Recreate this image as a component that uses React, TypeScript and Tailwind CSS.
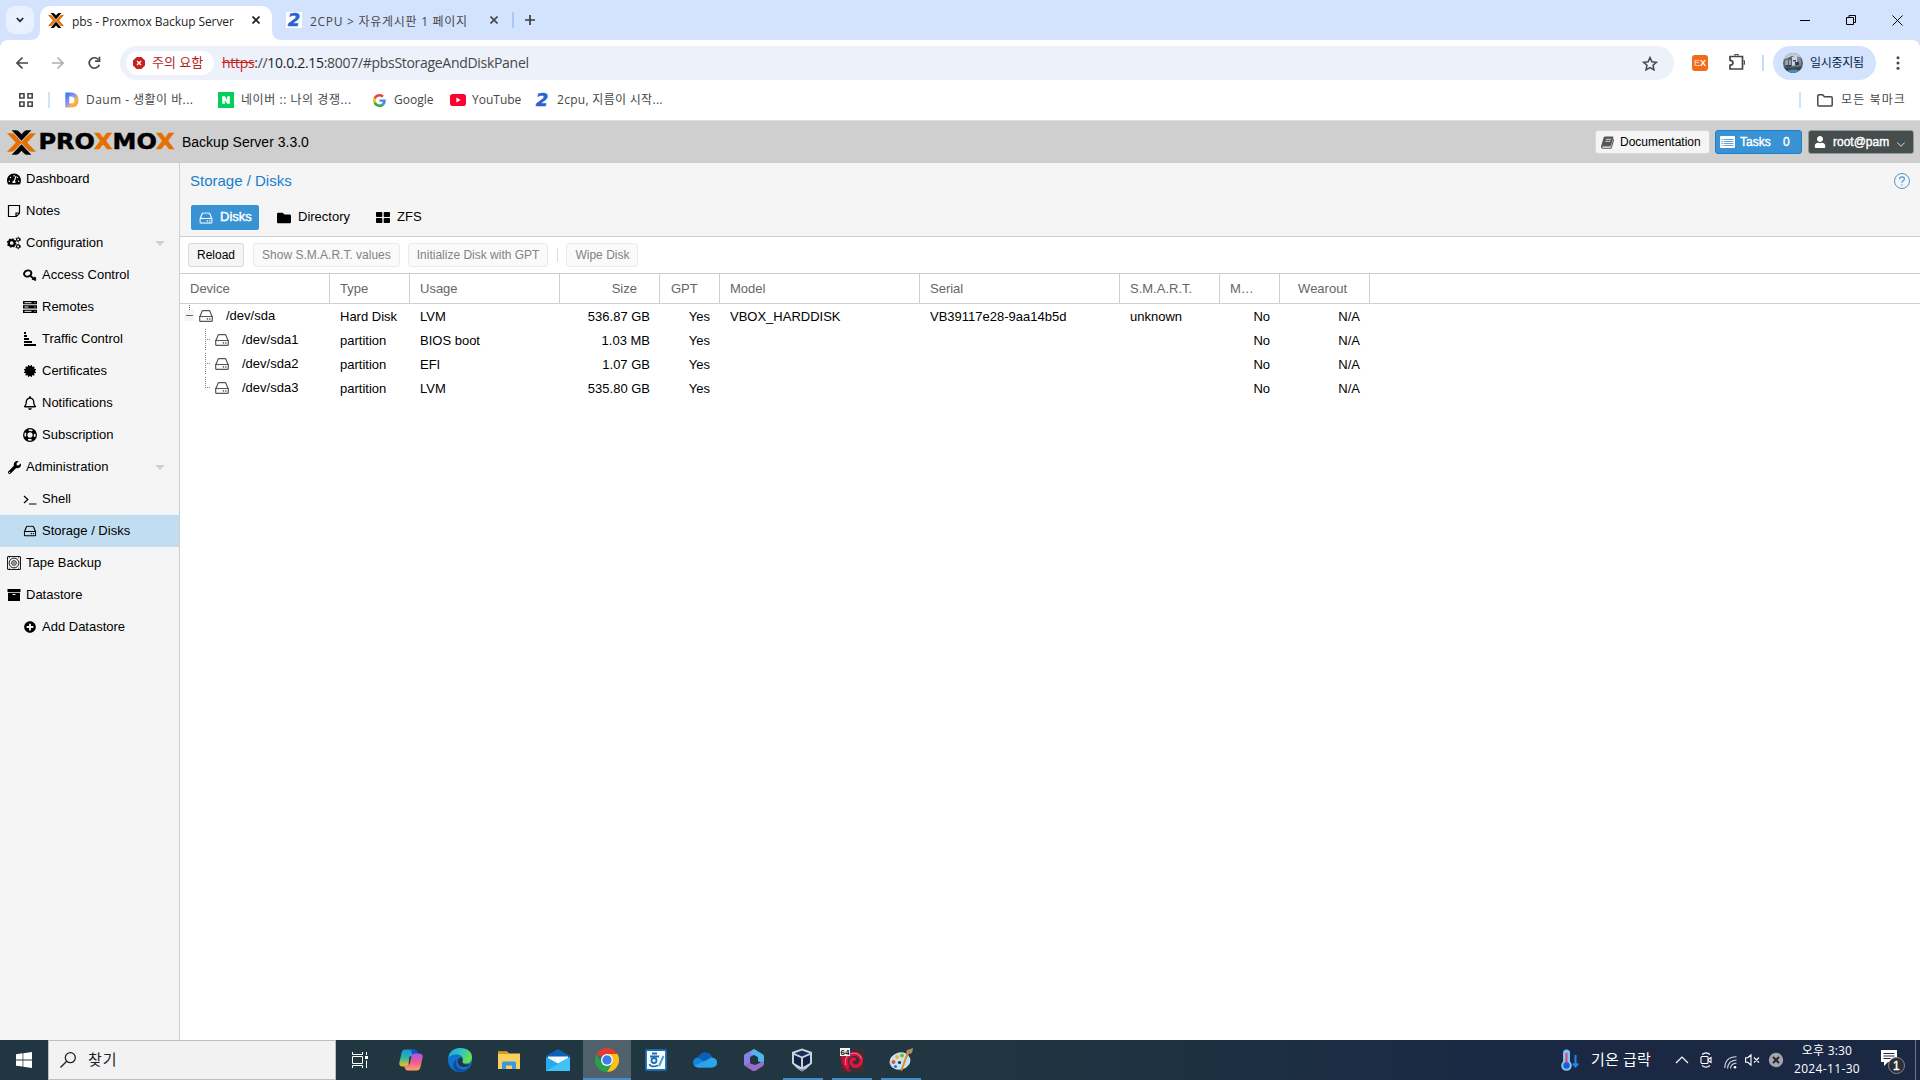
import type { ReactNode } from 'react';
import { FaCertificate, FaFolder, FaPlusCircle, FaRegBell, FaTachometerAlt, FaUser, FaWrench } from 'react-icons/fa';

/* ── Small icons ──────────────────────────────────────────────── */

function HddIcon({ className = '' }: { className?: string }) {
  return (
    <svg viewBox="0 0 14 12" width="14" height="12" fill="none" stroke="currentColor" strokeWidth="1.2" className={className}>
      <path d="M1 6.500 2.900 1.600Q3.200.7 4.100.7h5.800q.9 0 1.200.9L13 6.500" />
      <path d="M.7 6.500h12.600v4q0 .9-.9.9H1.600q-.9 0-.9-.9z" />
      <path d="M7.800 9h1.300M10.200 9h1.300" strokeWidth="1.300" />
    </svg>
  );
}

function NoteIcon() {
  return (
    <svg viewBox="0 0 14 14" width="14" height="14" fill="none" stroke="currentColor" strokeWidth="1.200">
      <path d="M1.500 1.500h11v7.800l-3.200 3.200H1.500zM12.500 9H9v3.500" />
    </svg>
  );
}

function CogsIcon() {
  return (
    <svg viewBox="0 0 15 14" width="15" height="14" fill="none" stroke="currentColor">
      <circle cx="5" cy="7" r="3.100" strokeWidth="2.200" />
      <circle cx="5" cy="7" r="4.300" strokeWidth="1.600" strokeDasharray="1.690 1.690" />
      <circle cx="11.900" cy="3.300" r="1.700" strokeWidth="1.200" />
      <circle cx="11.900" cy="3.300" r="2.500" strokeDasharray="1.300 1.300" />
      <circle cx="11.900" cy="10.700" r="1.700" strokeWidth="1.200" />
      <circle cx="11.900" cy="10.700" r="2.500" strokeDasharray="1.300 1.300" />
    </svg>
  );
}

function KeyIcon() {
  return (
    <svg viewBox="0 0 14 13" width="14" height="13" fill="none" stroke="currentColor" strokeWidth="2">
      <ellipse cx="4.700" cy="4.500" rx="3.700" ry="3" transform="rotate(-20 4.700 4.500)" />
      <path d="M7 6.500l5.800 5M9.300 10.800l1.500-1.800M11.300 8l1.500 1.700" strokeWidth="1.700" />
    </svg>
  );
}

function ServerIcon() {
  return (
    <svg viewBox="0 0 14 12" width="14" height="12">
      <path d="M0 0h14v3.300H0zM0 4.300h14v3.300H0zM0 8.700h14V12H0z" fill="currentColor" />
      <path d="M1.500 1.700h7M1.500 6h4M1.500 10.300h7M11.500 1.700h1M11.500 6h1M11.500 10.300h1" stroke="#f5f5f5" strokeWidth="1" />
    </svg>
  );
}

function LifeRingIcon() {
  return (
    <svg viewBox="0 0 14 14" width="14" height="14" fill="none" stroke="currentColor">
      <circle cx="7" cy="7" r="6.300" strokeWidth="1.300" />
      <circle cx="7" cy="7" r="3.300" strokeWidth="1.300" />
      <circle cx="7" cy="7" r="4.800" strokeWidth="3.400" strokeDasharray="3.800 3.740" strokeDashoffset="-1.900" />
    </svg>
  );
}

function ArchiveIcon() {
  return (
    <svg viewBox="0 0 14 12" width="14" height="12">
      <path d="M.5 0h13v3H.5zM1 3.700h12V12H1z" fill="currentColor" />
      <path d="M5.500 5.500h3" stroke="#f5f5f5" />
    </svg>
  );
}

function TrafficIcon() {
  return (
    <svg viewBox="0 0 14 14" width="14" height="14" fill="currentColor">
      <path d="M1 0h2v2H1zM1 3h3v2H1zM1 6h5v2H1zM1 9h8v2H1zM1 12h12v2H1z" />
    </svg>
  );
}

function TerminalIcon() {
  return (
    <svg viewBox="0 0 14 12" width="14" height="12" fill="none" stroke="currentColor" strokeWidth="1.2">
      <path d="M1 3l3.800 3.500L1 10M6 11h7.500" />
    </svg>
  );
}

function TapeIcon() {
  return (
    <svg viewBox="0 0 14 14" width="14" height="14" fill="none" stroke="currentColor" strokeWidth=".9">
      <rect x=".5" y=".5" width="13" height="13" rx=".5" />
      <circle cx="7" cy="7" r="4.900" />
      <circle cx="7" cy="7" r="2.300" />
      <circle cx="7" cy="7" r=".8" fill="currentColor" stroke="none" />
      <path d="M1.800 1.800h1M11.200 1.800h1M1.800 12.200h1M11.200 12.200h1" />
    </svg>
  );
}

function BookIcon() {
  return (
    <svg viewBox="0 0 14 13" width="14" height="13" fill="#555">
      <path d="M4.200.5h7.300q1.200 0 .9 1.200L10 9.500q-.3 1-1.400 1H2q-.8 0-.9.500 0 .7.900.7h7.200q.6 0 .8-.6l2.400-8q.9.400.6 1.400l-2.100 7.100q-.4 1.200-1.500 1.200H2Q.2 12.800 0 11.200q-.1-.8.300-1.700L2.600 1.700Q3 .5 4.200.5z" />
      <path d="M5 3.300h5M4.400 5.300h5" stroke="#f5f5f5" strokeWidth=".8" />
    </svg>
  );
}

function TaskListIcon() {
  return (
    <svg viewBox="0 0 15 12" width="15" height="12">
      <rect width="15" height="12" rx="1" fill="#fff" />
      <path d="M1.500 3.500h12M1.500 5.500h12M1.500 7.500h12M1.500 9.500h12" stroke="#3892d4" strokeWidth=".8" />
      <path d="M3.300 3v8" stroke="#fff" strokeWidth=".8" />
    </svg>
  );
}

function ProxmoxMark({ width, height }: { width: number; height: number }) {
  return (
    <svg viewBox="0 0 28 26" width={width} height={height} preserveAspectRatio="none">
      <path d="M0 3.500h4q2 0 3.400 1.500L14.500 13 7.400 21Q6 22.500 4 22.500H0L8.500 13z" fill="#e57000" />
      <path d="M28 3.500h-4q-2 0-3.400 1.500L13.500 13l7.100 8Q22 22.500 24 22.500h4L19.500 13z" fill="#e57000" />
      <path d="M4.500.2h4q1.700 0 3 1.300L14 4.300l2.500-2.800Q17.800.2 19.500.2h4L14 11.200zM4.500 25.800h4q1.700 0 3-1.300L14 21.700l2.500 2.800q1.300 1.300 3 1.300h4L14 14.800z" fill="#000" />
    </svg>
  );
}

function TwoIcon() {
  return (
    <span className="h-4 w-4 text-center font-['DejaVu_Sans'] text-[18px] leading-4 font-bold text-[#2a62d4] italic [-webkit-text-stroke:0.5px]">
      2
    </span>
  );
}

function CloseX({ color }: { color: string }) {
  return (
    <svg viewBox="0 0 8 8" width="8" height="8" stroke={color} strokeWidth="1.6">
      <path d="M.5.5l7 7M7.500.5l-7 7" />
    </svg>
  );
}

/* ── Browser chrome ───────────────────────────────────────────── */

function TabStrip() {
  return (
    <div className="flex h-10 bg-[#d3e3fd] text-[12px] leading-4">
      <div className="mt-1.5 ml-1.5 flex h-7 w-7 items-center justify-center rounded-[9px] bg-[#e9f1fe]">
        <svg viewBox="0 0 8 6" width="8" height="6" fill="none" stroke="#1f1f1f" strokeWidth="1.7">
          <path d="M.8 1 4 4.300 7.200 1" />
        </svg>
      </div>
      <div className="relative mt-1.5 ml-1.5 flex h-[34px] w-[232px] rounded-t-[10px] bg-white pl-2">
        <svg viewBox="0 0 10 10" width="10" height="10" className="absolute bottom-0 left-[-10px]" fill="#fff">
          <path d="M10 0v10H0Q10 10 10 0z" />
        </svg>
        <svg viewBox="0 0 10 10" width="10" height="10" className="absolute right-[-10px] bottom-0" fill="#fff">
          <path d="M0 0v10h10Q0 10 0 0z" />
        </svg>
        <div className="mt-[7px]">
          <ProxmoxMark width={16} height={15} />
        </div>
        <span className="mt-2 ml-2 w-[168px] tracking-[-0.08px] whitespace-nowrap text-[#1f1f1f]">pbs - Proxmox Backup Server</span>
        <div className="mt-2.5 ml-3">
          <CloseX color="#1f1f1f" />
        </div>
      </div>
      <div className="mt-3 ml-[14px] flex h-4 w-4 items-center justify-center bg-white">
        <TwoIcon />
      </div>
      <span className="mt-[14px] ml-2 w-[168px] tracking-[0.72px] whitespace-nowrap text-[#474747]">2CPU &gt; 자유게시판 1 페이지</span>
      <div className="mt-4 ml-3">
        <CloseX color="#474747" />
      </div>
      <div className="mt-3 ml-3.5 h-4 w-0.5 rounded bg-[#a8c7fa]" />
      <svg viewBox="0 0 10 10" width="10" height="10" className="mt-[15px] ml-[11px]" stroke="#3c3c3c" strokeWidth="1.7">
        <path d="M5 0v10M0 5h10" />
      </svg>
      <svg viewBox="0 0 104 12" width="104" height="12" className="mt-3.5 mr-[17px] ml-auto" fill="none" stroke="#000" strokeWidth="1">
        <path d="M1 6.500h10M47.500 3.500h7v7h-7zM50 3.500V1.500h6.500v7H54.500M93.500 1.500l10 10M103.500 1.500l-10 10" />
      </svg>
    </div>
  );
}

function Toolbar() {
  return (
    <div className="bg-[#d3e3fd]">
      <div className="flex h-10 items-center rounded-t-lg bg-white pt-1.5">
        <svg viewBox="0 0 86 14" width="86" height="14" className="ml-4" fill="none" strokeWidth="1.700">
          <path d="M12 7H1.500M6.500 1.500 1 7l5.500 5.500" stroke="#474747" />
          <path d="M36 7h10.500M41.500 1.500 47 7l-5.500 5.500" stroke="#b0b0b0" />
          <path d="M82.300 3.500A5.200 5.200 0 1 0 83.300 8.700M83.500.8v4.400h-4.400" stroke="#474747" />
        </svg>
        <div className="ml-[18px] flex h-[34px] w-[1554px] items-center rounded-full bg-[#ecf1fa] pl-1.5">
          <div className="flex h-6 w-[88px] items-center rounded-full bg-white pl-[7px]">
            <svg viewBox="0 0 12 12" width="12" height="12">
              <path d="M3.600 0h4.800L12 3.600v4.800L8.400 12H3.600L0 8.400V3.600z" fill="#c5221f" />
              <path d="M4 4l4 4M8 4L4 8" stroke="#fff" strokeWidth="1.300" />
            </svg>
            <span className="ml-[7px] -translate-y-px text-[13px] leading-4 text-[#b3261e]">주의 요함</span>
          </div>
          <div className="ml-2 text-[14px] leading-5 tracking-[-0.3px] text-[#474747]">
            <span className="text-[#c5221f] line-through">https</span>://<span className="text-[#1f1f1f]">10.0.2.15</span>:8007/#pbsStorageAndDiskPanel
          </div>
          <svg viewBox="0 0 16 15" width="16" height="15" className="mr-4 ml-auto" fill="none" stroke="#474747" strokeWidth="1.500">
            <path d="M8 1.600l1.900 4.200 4.500.5-3.400 3 1 4.500L8 11.500l-4 2.300 1-4.500-3.400-3 4.500-.5z" />
          </svg>
        </div>
        <div className="ml-[18px] flex h-4 w-4 items-center justify-center rounded-[3px] bg-[#f26a1b] font-['Liberation_Sans'] text-[9px] leading-4 font-bold text-white">
          <span className="text-[#fbc9a5]">E</span>X
        </div>
        <svg viewBox="0 0 16 16" width="16" height="16" className="-mt-0.5 ml-[21px]" fill="none" stroke="#474747" strokeWidth="1.700">
          <path d="M1 2.500h12.500V15H1v-3.800Q4 11 4 8.700T1 6.300z" />
          <path d="M6 1.500a1.500 1.500 0 0 1 3 0M14.500 7a1.500 1.500 0 0 1 0 3" />
        </svg>
        <div className="ml-[17px] h-4 w-0.5 bg-[#c7dafc]" />
        <div className="ml-[9px] flex h-[34px] w-[103px] items-center rounded-full bg-[#d3e3fd] pl-2.5">
          <svg viewBox="0 0 20 20" width="20" height="20">
            <clipPath id="avatar">
              <circle cx="10" cy="10" r="10" />
            </clipPath>
            <g clipPath="url(#avatar)">
              <rect width="20" height="20" fill="#59636b" />
              <path d="M0 0h20v5L9 3 0 7z" fill="#bccbd8" />
              <path d="M9 4l5-1.500V12l-5 1z" fill="#cfd5da" />
              <path d="M14 3l4 3v6l-4 1z" fill="#7f8c98" />
              <path d="M2 8l3-2v6H2zM6 7h2v6H6z" fill="#98a3a8" />
              <path d="M3 12h5v1.500H3zM12 9h4v3h-4z" fill="#2c3a5c" />
              <path d="M10 7h3v1.500h-3z" fill="#3a4a78" />
              <path d="M0 14l8 1 12-1v6H0z" fill="#3a4147" />
              <path d="M5 17.500q6-2 11 0V20H5z" fill="#3d8fc0" />
            </g>
          </svg>
          <span className="ml-[7px] text-[12px] leading-4 tracking-[-0.3px] whitespace-nowrap text-[#041e49]">일시중지됨</span>
        </div>
        <svg viewBox="0 0 4 14" width="4" height="14" className="ml-5" fill="#474747">
          <circle cx="2" cy="1.700" r="1.500" />
          <circle cx="2" cy="7" r="1.500" />
          <circle cx="2" cy="12.300" r="1.500" />
        </svg>
      </div>
    </div>
  );
}

function Bookmarks() {
  return (
    <div className="flex h-[41px] items-center border-b border-[#dfdfdf] bg-white text-[12px] leading-4 whitespace-nowrap text-[#474747]">
      <svg viewBox="0 0 14 14" width="14" height="14" className="ml-[19px]" fill="none" stroke="#474747" strokeWidth="1.600">
        <path d="M.8.8h4.200V5H.8zM9 .8h4.200V5H9zM.8 9h4.200v4.200H.8zM9 9h4.200v4.200H9z" />
      </svg>
      <div className="ml-[15px] h-4 w-0.5 bg-[#d3e3fd]" />
      <svg viewBox="0 0 14 16" width="14" height="16" className="ml-[15px]">
        <defs>
          <linearGradient id="daum" x1="0" x2="1" y1="0" y2="1">
            <stop offset="0" stopColor="#3f7df5" />
            <stop offset=".5" stopColor="#a99ad8" />
            <stop offset=".75" stopColor="#ffb43c" />
            <stop offset="1" stopColor="#ff9b3c" />
          </linearGradient>
        </defs>
        <path d="M2.300 2.500v11H6q5.500 0 5.500-5.500T6 2.500z" fill="none" stroke="url(#daum)" strokeWidth="4" />
      </svg>
      <span className="ml-[7px] w-[132px] tracking-[0.45px]">Daum - 생활이 바...</span>
      <svg viewBox="0 0 16 16" width="16" height="16">
        <rect width="16" height="16" fill="#03cf5d" />
        <path d="M4.200 4.200h2.700l2.300 3.500V4.200h2.600v7.600H9.200L6.800 8.300v3.500H4.200z" fill="#fff" />
      </svg>
      <span className="ml-[7px] w-[132px] tracking-[0.55px]">네이버 :: 나의 경쟁...</span>
      <svg viewBox="0 0 48 48" width="13" height="13">
        <path fill="#EA4335" d="M24 9.500c3.540 0 6.710 1.220 9.210 3.600l6.850-6.850C35.900 2.380 30.470 0 24 0 14.620 0 6.510 5.380 2.560 13.220l7.980 6.190C12.430 13.720 17.740 9.500 24 9.500z" />
        <path fill="#4285F4" d="M46.980 24.550c0-1.570-.15-3.090-.38-4.550H24v9.020h12.940c-.58 2.960-2.260 5.480-4.780 7.180l7.730 6c4.510-4.180 7.090-10.360 7.090-17.650z" />
        <path fill="#FBBC05" d="M10.530 28.590c-.48-1.450-.76-2.990-.76-4.590s.27-3.140.76-4.590l-7.980-6.190C.92 16.460 0 20.120 0 24c0 3.880.92 7.540 2.560 10.780l7.970-6.190z" />
        <path fill="#34A853" d="M24 48c6.480 0 11.930-2.130 15.890-5.810l-7.730-6c-2.150 1.450-4.920 2.300-8.160 2.300-6.260 0-11.570-4.220-13.470-9.910l-7.980 6.190C6.510 42.620 14.620 48 24 48z" />
      </svg>
      <span className="ml-2 w-14">Google</span>
      <svg viewBox="0 0 16 12" width="16" height="12">
        <rect width="16" height="12" rx="2.800" fill="#ff0033" />
        <path d="M6.400 3.500v5l4.200-2.500z" fill="#fff" />
      </svg>
      <span className="ml-1.5 w-[62px]">YouTube</span>
      <TwoIcon />
      <span className="ml-[7px] tracking-[0.3px]">2cpu, 지름이 시작...</span>
      <div className="ml-auto h-4 w-0.5 bg-[#d3e3fd]" />
      <svg viewBox="0 0 16 13" width="16" height="13" className="ml-4" fill="none" stroke="#474747" strokeWidth="1.500">
        <path d="M.8 2q0-1.200 1.200-1.200h3.700L7.400 2.700H14q1.200 0 1.200 1.200v7q0 1.200-1.200 1.200H2q-1.200 0-1.200-1.200z" />
      </svg>
      <span className="mr-[14px] ml-2 w-[65px] tracking-[1.1px]">모든 북마크</span>
    </div>
  );
}

/* ── Proxmox Backup Server ────────────────────────────────────── */

function AppHeader() {
  return (
    <header className="flex h-[42px] items-center bg-[#cfcfcf] pl-[7px] text-[12px]">
      <ProxmoxMark width={29} height={25} />
      <svg width="136" height="28" className="ml-[3px] overflow-visible font-['DejaVu_Sans'] text-[21px] font-bold">
        <text x="-.5" y="21" textLength="136" lengthAdjust="spacingAndGlyphs" stroke="#000" strokeWidth=".5">
          PRO<tspan fill="#e57000" stroke="#e57000">X</tspan>MO<tspan fill="#e57000" stroke="#e57000">X</tspan>
        </text>
      </svg>
      <span className="ml-[7px] text-[14px]">Backup Server 3.3.0</span>
      <div className="mr-1.5 ml-auto flex h-6 gap-[5px]">
        <div className="flex w-[115px] items-center rounded-[3px] border border-[#d8d8d8] bg-[#f5f5f5] pl-[5px]">
          <BookIcon />
          <span className="ml-[5px]">Documentation</span>
        </div>
        <div className="flex w-[87px] items-center rounded-[3px] border border-[#1b80c8] bg-[#3892d4] pl-1 text-white [-webkit-text-stroke:0.4px]">
          <TaskListIcon />
          <span className="ml-[5px] w-[43px]">Tasks</span>
          <span>0</span>
        </div>
        <div className="ml-px flex w-[106px] items-center rounded-[3px] border border-[#8f9a9a] bg-[#464d4d] pl-[5px] text-white [-webkit-text-stroke:0.4px]">
          <FaUser size={12} />
          <span className="ml-[7px]">root@pam</span>
          <svg viewBox="0 0 8 5" width="8" height="5" className="mt-1 ml-2" fill="none" stroke="#ddd" strokeWidth="1">
            <path d="M.3.500 4 4.300 7.700.5" />
          </svg>
        </div>
      </div>
    </header>
  );
}

type NavItem = { label: string; icon: ReactNode; child?: boolean; open?: boolean; active?: boolean };

const NAV: NavItem[] = [
  { label: 'Dashboard', icon: <FaTachometerAlt size={14} /> },
  { label: 'Notes', icon: <NoteIcon /> },
  { label: 'Configuration', icon: <CogsIcon />, open: true },
  { label: 'Access Control', icon: <KeyIcon />, child: true },
  { label: 'Remotes', icon: <ServerIcon />, child: true },
  { label: 'Traffic Control', icon: <TrafficIcon />, child: true },
  { label: 'Certificates', icon: <FaCertificate size={12} />, child: true },
  { label: 'Notifications', icon: <FaRegBell size={14} />, child: true },
  { label: 'Subscription', icon: <LifeRingIcon />, child: true },
  { label: 'Administration', icon: <FaWrench size={13} />, open: true },
  { label: 'Shell', icon: <TerminalIcon />, child: true },
  { label: 'Storage / Disks', icon: <HddIcon className="scale-90" />, child: true, active: true },
  { label: 'Tape Backup', icon: <TapeIcon /> },
  { label: 'Datastore', icon: <ArchiveIcon /> },
  { label: 'Add Datastore', icon: <FaPlusCircle size={12} />, child: true },
];

function Sidebar() {
  return (
    <nav className="w-[180px] border-r border-[#cfcfcf] bg-[#f5f5f5] text-[13px]">
      {NAV.map((item) => (
        <div
          key={item.label}
          className={`flex h-8 items-center ${item.child ? 'pl-[23px]' : 'pl-[7px]'} ${item.active ? 'bg-[#c1ddf1]' : ''}`}
        >
          <span className="flex w-3.5 justify-center">{item.icon}</span>
          <span className="ml-[5px]">{item.label}</span>
          {item.open && (
            <svg viewBox="0 0 10 5" width="10" height="5" className="mr-3.5 ml-auto" fill="#cfcfcf">
              <path d="M0 0h10L5 5z" />
            </svg>
          )}
        </div>
      ))}
    </nav>
  );
}

const COLUMNS = [
  { key: 'device', label: 'Device', cell: '', head: 'pl-2.5' },
  { key: 'type', label: 'Type', cell: '', head: 'pl-2.5' },
  { key: 'usage', label: 'Usage', cell: '', head: 'pl-2.5' },
  { key: 'size', label: 'Size', cell: 'text-right', head: 'text-right pr-[22px]' },
  { key: 'gpt', label: 'GPT', cell: 'text-right', head: 'pl-[11px]' },
  { key: 'model', label: 'Model', cell: '', head: 'pl-2.5' },
  { key: 'serial', label: 'Serial', cell: '', head: 'pl-2.5' },
  { key: 'smart', label: 'S.M.A.R.T.', cell: '', head: 'pl-2.5' },
  { key: 'mounted', label: 'M…', cell: 'text-right', head: 'pl-2.5' },
  { key: 'wearout', label: 'Wearout', cell: 'text-right', head: 'text-right pr-[22px]' },
] as const;

const DISKS = [
  { device: '/dev/sda', type: 'Hard Disk', usage: 'LVM', size: '536.87 GB', gpt: 'Yes', model: 'VBOX_HARDDISK', serial: 'VB39117e28-9aa14b5d', smart: 'unknown', mounted: 'No', wearout: 'N/A' },
  { device: '/dev/sda1', type: 'partition', usage: 'BIOS boot', size: '1.03 MB', gpt: 'Yes', model: '', serial: '', smart: '', mounted: 'No', wearout: 'N/A' },
  { device: '/dev/sda2', type: 'partition', usage: 'EFI', size: '1.07 GB', gpt: 'Yes', model: '', serial: '', smart: '', mounted: 'No', wearout: 'N/A' },
  { device: '/dev/sda3', type: 'partition', usage: 'LVM', size: '535.80 GB', gpt: 'Yes', model: '', serial: '', smart: '', mounted: 'No', wearout: 'N/A' },
];

const GRID = 'grid grid-cols-[150px_80px_150px_100px_60px_200px_200px_100px_60px_90px]';

function TreeLines({ row, last }: { row: number; last: boolean }) {
  if (row === 0) {
    return (
      <svg viewBox="0 0 19 24" width="19" height="24" stroke="#666" className="-mt-px">
        <path d="M9.500 1v5" strokeDasharray="1 1" />
        <rect x="4" y="6" width="10" height="11" fill="#f5f5f5" stroke="none" />
        <path d="M6 11.500h7" />
      </svg>
    );
  }
  return (
    <svg viewBox="0 0 35 24" width="35" height="24" stroke="#808080" strokeDasharray="1 1" className="-mt-px">
      <path d={last ? 'M25.500 1v11' : 'M25.500 1v22'} />
      <path d="M27 11.500h3" />
    </svg>
  );
}

function Button({ children, disabled }: { children: ReactNode; disabled?: boolean }) {
  return (
    <div
      className={`flex h-6 items-center rounded-[3px] border px-2 ${
        disabled ? 'border-[#ebebeb] bg-[#fafafa] text-[#838383]' : 'border-[#d8d8d8] bg-[#f5f5f5] text-black'
      }`}
    >
      {children}
    </div>
  );
}

function DiskPanel() {
  return (
    <main className="flex flex-1 flex-col bg-white">
      <div className="flex h-9 items-center justify-between bg-[#f5f5f5] px-2.5 text-[15px] text-[#157fcc]">
        <span>Storage / Disks</span>
        <svg viewBox="0 0 16 16" width="16" height="16" fill="none" stroke="#4a98d3">
          <circle cx="8" cy="8" r="7.500" />
          <path d="M5.600 6.200q0-2.400 2.400-2.400t2.400 2.100q0 1.100-1.300 1.900T8 9.900M8 11.300v1.200" strokeWidth="1.200" />
        </svg>
      </div>
      <div className="flex h-[38px] items-start border-b border-[#cfcfcf] bg-[#f5f5f5] pt-1.5 pl-[11px] text-[13px] text-black">
        <div className="flex h-[25px] w-[68px] items-center rounded-[2px] bg-[#3892d4] pl-2 text-white [-webkit-text-stroke:0.4px]">
          <HddIcon className="mt-px scale-95" />
          <span className="-mt-px ml-[7px]">Disks</span>
        </div>
        <div className="ml-[18px] flex h-[25px] w-[99px] items-center">
          <FaFolder size={14} />
          <span className="-mt-px ml-[7px]">Directory</span>
        </div>
        <div className="flex h-[25px] items-center">
          <svg viewBox="0 0 14 11" width="14" height="11">
            <path d="M.8 0h4.700q.8 0 .8.8v3.400q0 .8-.8.800H.8Q0 5 0 4.200V.8Q0 0 .8 0zM8.500 0h4.700q.8 0 .8.8v3.400q0 .8-.8.800H8.500q-.8 0-.8-.8V.8q0-.8.8-.8zM.8 6h4.700q.8 0 .8.800v3.400q0 .8-.8.800H.8q-.8 0-.8-.8V6.800Q0 6 .8 6zM8.500 6h4.700q.8 0 .8.800v3.400q0 .8-.8.800H8.500q-.8 0-.8-.8V6.800q0-.8.8-.8z" />
          </svg>
          <span className="-mt-px ml-[7px]">ZFS</span>
        </div>
      </div>
      <div className="flex h-[37px] items-center border-b border-[#cfcfcf] pl-2 text-[12px]">
        <Button>Reload</Button>
        <div className="ml-[9px] flex items-center gap-2">
          <Button disabled>Show S.M.A.R.T. values</Button>
          <Button disabled>Initialize Disk with GPT</Button>
          <div className="ml-px h-3.5 w-px bg-[#dcdcdc]" />
          <Button disabled>Wipe Disk</Button>
        </div>
      </div>
      <div className={`${GRID} h-[30px] border-b border-[#cfcfcf] text-[13px] leading-[29px] text-[#666]`}>
        {COLUMNS.map((col) => (
          <div key={col.key} className={`border-r border-[#cfcfcf] ${col.head}`}>
            {col.label}
          </div>
        ))}
      </div>
      {DISKS.map((disk, row) => (
        <div key={disk.device} className={`${GRID} h-6 text-[13px] leading-[25px] text-black`}>
          <div className="flex items-center">
            <TreeLines row={row} last={row === DISKS.length - 1} />
            <HddIcon className="-mt-px text-[#555]" />
            <span className="-mt-0.5 ml-[13px]">{disk.device}</span>
          </div>
          {COLUMNS.slice(1).map((col) => (
            <div key={col.key} className={`px-2.5 ${col.cell}`}>
              {disk[col.key]}
            </div>
          ))}
        </div>
      ))}
    </main>
  );
}

/* ── Taskbar ──────────────────────────────────────────────────── */

const TASK_ICONS: { name: string; state?: 'active' | 'open'; icon: ReactNode }[] = [
  {
    name: 'copilot',
    icon: (
      <svg viewBox="0 0 24 22" width="24" height="22">
        <defs>
          <linearGradient id="cp1" x1="0" x2="0" y1="0" y2="1">
            <stop offset="0" stopColor="#1e90e8" />
            <stop offset=".5" stopColor="#2fb5a0" />
            <stop offset="1" stopColor="#f5c518" />
          </linearGradient>
          <linearGradient id="cp2" x1="0" x2="0" y1="0" y2="1">
            <stop offset="0" stopColor="#a557f0" />
            <stop offset=".5" stopColor="#ee5a94" />
            <stop offset="1" stopColor="#ffa45c" />
          </linearGradient>
        </defs>
        <path d="M6 .5h9q2.500 0 3.200 2.500l.8 3h-4q-2 0-2.700 2.200L10 15q-.8 2.500-3.200 2.500H3.500Q-.5 17.500.5 13l2-9Q3.300.5 6 .5z" fill="url(#cp1)" />
        <path d="M12 .5h3q2.500 0 3.200 2.500l.8 3h-4l-1.500.8z" fill="#1b4fc4" />
        <path d="M18 21.500H9q-2.500 0-3.200-2.500L5 16.500h2.500q2 0 2.700-2.200L12.500 7q.8-2.500 3.200-2.500h4.800Q24.500 5 23.500 9l-2 9q-.8 3.500-3.500 3.500z" fill="url(#cp2)" />
        <path d="M10.500 7.500h2L10.800 14q-.4 1.500-1.300 1.500z" fill="#203640" />
      </svg>
    ),
  },
  {
    name: 'edge',
    icon: (
      <svg viewBox="0 0 24 24" width="24" height="24">
        <defs>
          <linearGradient id="ed1" x1="0" x2="1" y1="0" y2=".4">
            <stop offset="0" stopColor="#1ba4e2" />
            <stop offset=".6" stopColor="#35c8b8" />
            <stop offset="1" stopColor="#66e04e" />
          </linearGradient>
        </defs>
        <circle cx="12" cy="12" r="12" fill="#0f72cf" />
        <path d="M.3 10Q2 0 12 0q12 .5 12 9.500 0 6-6.500 6-4 0-3-2.500 1.500-5-4-6.500Q4 5.500.3 10z" fill="url(#ed1)" />
        <path d="M8.500 11Q6 19 14 21.500q4.500 1 8-4Q19 24 12 24 4 22.500 5.500 15.500 6.500 12 8.500 11z" fill="#0c4da2" />
        <path d="M13.500 9.500q-3.500 0-4 3.500 0 5.500 6.500 6 4 0 6.500-3-9 1.500-8-3 .8-2.500-1-3.500z" fill="#203640" />
      </svg>
    ),
  },
  {
    name: 'explorer',
    icon: (
      <svg viewBox="0 0 22 19" width="22" height="19">
        <path d="M0 .5h9l2 2H22V18H0z" fill="#f9cf5d" />
        <path d="M0 .5h9L10.500 3H0z" fill="#dd9a11" />
        <path d="M4 18v-6q0-1.500 1.500-1.500h11q1.500 0 1.500 1.500v6h-4v-3.500H8V18z" fill="#3a97e4" />
      </svg>
    ),
  },
  {
    name: 'mail',
    icon: (
      <svg viewBox="0 0 24 22" width="24" height="22">
        <path d="M12 0 24 7v5H0V7z" fill="#0d61b8" />
        <path d="M2 7.500h20V15H2z" fill="#f4f8fb" />
        <path d="M0 8l12 6.500L24 8v14H0z" fill="#27a9ee" />
        <path d="M24 8 0 22h24z" fill="#3fc3f7" />
      </svg>
    ),
  },
  {
    name: 'chrome',
    state: 'active',
    icon: (
      <svg viewBox="0 0 24 24" width="24" height="24">
        <path d="M12 12 1.600 6A12 12 0 0 1 22.400 6z" fill="#e33b2e" />
        <path d="M12 12V6h10.400A12 12 0 0 1 12 24l5.200-9z" fill="#fbc116" />
        <path d="M12 12l5.200 3L12 24A12 12 0 0 1 1.600 6l5.200 9z" fill="#28a148" />
        <circle cx="12" cy="12" r="6" fill="#fff" />
        <circle cx="12" cy="12" r="4.700" fill="#3b7ded" />
      </svg>
    ),
  },
  {
    name: 'hangul',
    icon: (
      <svg viewBox="0 0 22 22" width="22" height="22" fill="none" stroke="#1a6bb0" strokeWidth="1.800">
        <rect x="1" y="1" width="20" height="20" rx="1" fill="#f5fafd" />
        <path d="M7 4.500h5M5 7.500h9" />
        <circle cx="9" cy="11.500" r="2.500" />
        <path d="M4.500 15q1 4 8.500 1.500" />
        <path d="M18.500 7l-4.500 10" stroke="#4aa3d8" strokeWidth="2" />
      </svg>
    ),
  },
  {
    name: 'onedrive',
    icon: (
      <svg viewBox="0 0 24 16" width="24" height="16">
        <path d="M5 15.500a5 5 0 0 1 0-10Q8 .5 12.500.5q5 .2 6.500 5 5 1 5 5t-5 5z" fill="#1484dc" />
        <path d="M5 5.500Q8 .5 12.500.5q5 .2 6.500 5L12 10z" fill="#0a5fb6" />
        <path d="M12 9l6-3.500q6 .5 6 5t-5 5H5q-3-.5-3.500-2z" fill="#2ba4ea" />
      </svg>
    ),
  },
  {
    name: 'm365',
    icon: (
      <svg viewBox="0 0 22 24" width="22" height="24">
        <path d="M11 1 2 6q-1 .6-1 2v8q0 1.400 1 2l5-2.500V10l8-5z" fill="#8a7fe6" />
        <path d="M11 1l8.500 5q1.500.8 1.500 2.500V16l-6-3V9.500L7 5z" fill="#52b4ec" />
        <path d="M21 13v3q0 1.200-1 2l-7 4.500q-2 1-4 0L2 18l5-3 5 2z" fill="#9a6bc9" />
        <path d="M7 9l4-2 4 2.300v4.700l-4 2.500L7 15z" fill="#203640" />
      </svg>
    ),
  },
  {
    name: 'virtualbox',
    state: 'open',
    icon: (
      <svg viewBox="0 0 22 24" width="22" height="24" className="mr-[3px]">
        <path d="M11 .5 21 4v11.500L15 21l-4 2.500L7 21l-6-5.500V4z" fill="#c9d3dd" />
        <path d="M11 2.500l7.500 2.800L11 8.500 3.500 5.300z" fill="#14305c" />
        <path d="M3 7l7 3v9l-7-4zM19 7l-7 3v9l7-4z" fill="#0e2346" />
        <path d="M7 20l4 1.500 4-1.500-4 3.500z" fill="#7b8894" />
      </svg>
    ),
  },
  {
    name: 'debian-vm',
    state: 'open',
    icon: (
      <svg viewBox="0 0 24 24" width="24" height="24">
        <rect width="24" height="24" fill="#3a3034" />
        <path d="M1 8Q1 18 7.500 23.500h4Q4.500 17 4.500 8z" fill="#c80c38" />
        <path d="M8 20Q4 12 8.500 8q4-3 9-1.500 5 3 3.500 8-2.500 5-7.500 3.500-3.500-2-2.500-5.500 2-2.500 4.500-.5" fill="none" stroke="#e01444" strokeWidth="3.400" />
        <path d="M5.500 17Q4 9 10 5.500q9-2 11.500 5" fill="none" stroke="#ff93a5" strokeWidth=".8" />
        <rect width="10" height="8" fill="#f5f5f5" />
        <text x=".6" y="6.800" className="font-['Liberation_Sans'] text-[8px] font-bold" fill="#111">64</text>
      </svg>
    ),
  },
  {
    name: 'paint',
    state: 'open',
    icon: (
      <svg viewBox="0 0 24 24" width="24" height="24">
        <ellipse cx="11" cy="13" rx="10.500" ry="8.500" fill="#c5e3f3" transform="rotate(-15 11 13)" />
        <circle cx="4.500" cy="14" r="2" fill="#e4523b" />
        <circle cx="8" cy="9" r="1.900" fill="#f1b32b" />
        <circle cx="13" cy="7.500" r="1.900" fill="#74b72e" />
        <circle cx="6.500" cy="18.500" r="1.600" fill="#396fd1" />
        <circle cx="10.500" cy="14.500" r="1.600" fill="#203640" />
        <path d="M20 5l-6.500 17-1.500 1.500-.3-2L18 4z" fill="#e8892b" />
        <path d="M17.500 4.500Q17 1.500 20 1.500L24 0l-.5 3Q23 6 20 6z" fill="#b98a5f" />
      </svg>
    ),
  },
];

function Taskbar() {
  return (
    <footer className="flex h-10 bg-linear-to-r from-[#203640] from-50% to-[#1a2844] to-80% text-white">
      <div className="flex w-12 items-center justify-center">
        <svg viewBox="0 0 16 16" width="16" height="16" fill="#fff">
          <path d="M0 2.200 6.600 1.300v6.200H0zM7.300 1.200 16 0v7.500H7.300zM0 8.400h6.600v6.200L0 13.700zM7.300 8.400H16V16l-8.700-1.200z" />
        </svg>
      </div>
      <div className="flex w-72 items-center border border-[#bdbdbd] bg-[#f2f2f2] pl-[11px]">
        <svg viewBox="0 0 16 16" width="16" height="16" fill="none" stroke="#222" strokeWidth="1.300">
          <circle cx="10.300" cy="5.700" r="5" />
          <path d="M6.700 9.300.5 15.500" />
        </svg>
        <span className="ml-3 -translate-y-px text-[15px] leading-5 tracking-[1px] text-[#222]">찾기</span>
      </div>
      <div className="mr-[3px] flex w-12 items-center justify-center">
        <svg viewBox="0 0 16 16" width="16" height="16" fill="none" stroke="#fff" strokeWidth="1">
          <path d="M.5 0v2.500h10V0M.5 4.500h10v7H.5zM.5 16v-2.500h10V16M14.500 0v3M14.500 8.500V16" />
          <path d="M13 4h3v3h-3z" fill="#fff" stroke="none" />
        </svg>
      </div>
      <div className="flex gap-px">
        {TASK_ICONS.map((task) => (
          <div key={task.name} className={`flex w-12 flex-col items-center ${task.state === 'active' ? 'bg-[#4f626b]' : ''}`}>
            <div className="flex h-[38px] items-center pt-0.5">{task.icon}</div>
            {task.state && <div className={`h-0.5 bg-[#4d8bc4] ${task.state === 'active' ? 'w-12' : 'w-10'}`} />}
          </div>
        ))}
      </div>
      <div className="ml-auto flex items-center">
        <svg viewBox="0 0 18 22" width="18" height="22">
          <rect x="2" y=".5" width="7" height="17" rx="3.500" fill="#7fc3f0" />
          <circle cx="5.500" cy="16.500" r="5.300" fill="#7fc3f0" />
          <path d="M5.500 4v11" stroke="#e0436d" strokeWidth="2" />
          <circle cx="5.500" cy="16.500" r="3.200" fill="#1d5bd0" />
          <path d="M14.500 6v11M11.800 14.500l2.700 3 2.700-3" fill="none" stroke="#1e86e8" strokeWidth="2" />
        </svg>
        <span className="ml-3 w-[85px] -translate-y-px text-[15px] leading-5 tracking-[0.2px] whitespace-nowrap">기온 급락</span>
        <svg viewBox="0 0 14 8" width="14" height="8" className="-ml-px" fill="none" stroke="#fff" strokeWidth="1.200">
          <path d="M1 7l6-6 6 6" />
        </svg>
        <svg viewBox="0 0 12 16" width="12" height="16" className="ml-[11px]" fill="none" stroke="#fff" strokeWidth="1.100">
          <rect x="1" y="4.500" width="7" height="7" rx="1" />
          <path d="M8 7.500l3-2v5l-3-2M2 2.500Q6-.8 10 2.500M2 13.500q4 3.300 8 0" />
        </svg>
        <svg viewBox="0 0 13 13" width="13" height="13" className="mt-1 ml-3" fill="none" stroke="#d5dae2" strokeWidth="1.100">
          <path d="M.8 12Q1 1 12.500.8M3.500 12.500Q4 4.500 12.500 4M6.500 12.500q.5-5 6-5.500" />
          <circle cx="11" cy="11.300" r="1.300" fill="#fff" stroke="none" />
        </svg>
        <svg viewBox="0 0 15 12" width="15" height="12" className="ml-2" fill="none" stroke="#fff" strokeWidth="1.100">
          <path d="M.6 3.700h2.200L6 .8v10.400L2.800 8.300H.6zM9 3.500l5 5M14 3.500l-5 5" />
        </svg>
        <svg viewBox="0 0 16 16" width="16" height="16" className="ml-2">
          <circle cx="8" cy="8" r="7.200" fill="#a3a6ab" />
          <path d="M5 5l6 6M11 5l-6 6" stroke="#222" strokeWidth="1.800" />
        </svg>
        <div className="ml-2 w-[70px] text-center text-[12px] leading-[18px] whitespace-nowrap">
          <div className="tracking-[0.2px]">오후 3:30</div>
          <div className="tracking-[0.35px]">2024-11-30</div>
        </div>
        <svg viewBox="0 0 26 26" width="26" height="26" className="mt-1 ml-[18px]">
          <path d="M1 1h16v12H8l-4 4v-4H1z" fill="#fff" />
          <path d="M3.500 4.500h11M3.500 7h11M3.500 9.500h7" stroke="#1a2844" strokeWidth="1.100" />
          <circle cx="16.500" cy="16.500" r="8" fill="#2b2e34" stroke="#888" />
          <text x="13" y="21" className="font-['Liberation_Sans'] text-[12px]" fill="#fff" stroke="#fff" strokeWidth=".4">1</text>
        </svg>
        <div className="mr-1 ml-[9px] h-10 w-px bg-[#6d7688]" />
      </div>
    </footer>
  );
}

export default function App() {
  return (
    <div className="flex h-[1080px] w-[1920px] flex-col overflow-hidden bg-white font-['Open_Sans','Noto_Sans_CJK_KR',sans-serif]">
      <TabStrip />
      <Toolbar />
      <Bookmarks />
      <div className="flex flex-1 flex-col font-['Liberation_Sans',sans-serif] text-black">
        <AppHeader />
        <div className="flex flex-1">
          <Sidebar />
          <DiskPanel />
        </div>
      </div>
      <Taskbar />
    </div>
  );
}
